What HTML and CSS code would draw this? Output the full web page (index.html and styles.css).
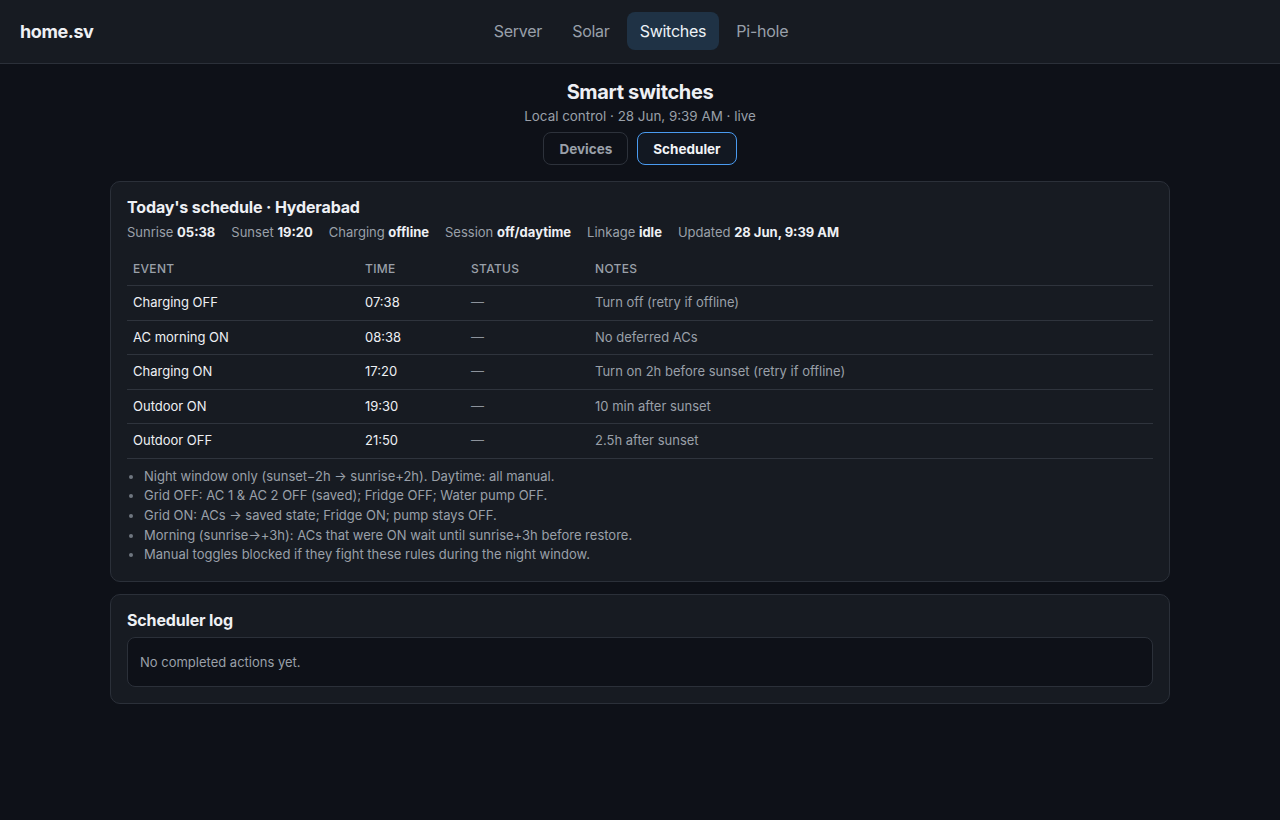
FILE: index.html
```html
<!DOCTYPE html>
<html lang="en">
<head>
<meta charset="utf-8">
<title>home.sv · Switches</title>
<link rel="stylesheet" href="styles.css">
</head>
<body>
<header class="topbar">
  <div class="logo">home.sv</div>
  <nav class="nav">
    <a class="nav-link">Server</a>
    <a class="nav-link">Solar</a>
    <a class="nav-link active">Switches</a>
    <a class="nav-link">Pi-hole</a>
  </nav>
</header>
<main class="main">
  <h1 class="page-title">Smart switches</h1>
  <div class="page-sub">Local control · 28 Jun, 9:39 AM · live</div>
  <div class="tabs">
    <button class="tab">Devices</button>
    <button class="tab active">Scheduler</button>
  </div>

  <section class="card">
    <h2 class="card-title">Today's schedule · Hyderabad</h2>
    <div class="meta">
      <span>Sunrise <b>05:38</b></span>
      <span>Sunset <b>19:20</b></span>
      <span>Charging <b>offline</b></span>
      <span>Session <b>off/daytime</b></span>
      <span>Linkage <b>idle</b></span>
      <span>Updated <b>28 Jun, 9:39 AM</b></span>
    </div>
    <table class="sched">
      <thead>
        <tr>
          <th class="c-event">Event</th>
          <th class="c-time">Time</th>
          <th class="c-status">Status</th>
          <th>Notes</th>
        </tr>
      </thead>
      <tbody>
        <tr><td>Charging OFF</td><td>07:38</td><td class="dash">—</td><td class="note">Turn off (retry if offline)</td></tr>
        <tr><td>AC morning ON</td><td>08:38</td><td class="dash">—</td><td class="note">No deferred ACs</td></tr>
        <tr><td>Charging ON</td><td>17:20</td><td class="dash">—</td><td class="note">Turn on 2h before sunset (retry if offline)</td></tr>
        <tr><td>Outdoor ON</td><td>19:30</td><td class="dash">—</td><td class="note">10 min after sunset</td></tr>
        <tr><td>Outdoor OFF</td><td>21:50</td><td class="dash">—</td><td class="note">2.5h after sunset</td></tr>
      </tbody>
    </table>
    <ul class="rules">
      <li>Night window only (sunset−2h → sunrise+2h). Daytime: all manual.</li>
      <li>Grid OFF: AC 1 &amp; AC 2 OFF (saved); Fridge OFF; Water pump OFF.</li>
      <li>Grid ON: ACs → saved state; Fridge ON; pump stays OFF.</li>
      <li>Morning (sunrise→+3h): ACs that were ON wait until sunrise+3h before restore.</li>
      <li>Manual toggles blocked if they fight these rules during the night window.</li>
    </ul>
  </section>

  <section class="card">
    <h2 class="card-title">Scheduler log</h2>
    <div class="log-box">No completed actions yet.</div>
  </section>
</main>
</body>
</html>
```

FILE: styles.css
```css
* { box-sizing: border-box; }
html, body { margin: 0; padding: 0; }
body {
  background: #0e1118;
  color: #e6e9ee;
  font-family: Inter, "Noto Sans", "Liberation Sans", sans-serif;
  min-height: 820px;
}
.topbar {
  height: 64px;
  background: #171b22;
  border-bottom: 1px solid #2b3039;
  display: flex;
  align-items: center;
  position: relative;
  padding: 0 20px;
}
.logo {
  font-size: 18px;
  font-weight: 700;
  color: #eef0f4;
  letter-spacing: -0.4px;
}
.nav {
  position: absolute;
  left: 0;
  right: 0;
  top: 12px;
  display: flex;
  justify-content: center;
  gap: 4px;
  padding-left: 2px;
}
.nav-link {
  font-size: 16px;
  line-height: 20px;
  letter-spacing: -0.25px;
  padding: 9px 13px;
  border-radius: 8px;
  color: #99a0aa;
  cursor: pointer;
}
.nav-link.active {
  background: #1f3245;
  color: #eef2f7;
}
.main {
  width: 1060px;
  margin: 16px auto 0;
  display: flex;
  flex-direction: column;
  align-items: stretch;
}
.page-title {
  margin: 0;
  text-align: center;
  font-size: 20px;
  line-height: 24px;
  font-weight: 700;
  letter-spacing: -0.35px;
  color: #eef0f4;
}
.page-sub {
  margin-top: 3px;
  text-align: center;
  font-size: 13.4px;
  line-height: 18px;
  color: #9aa0a9;
}
.tabs {
  margin-top: 7px;
  display: flex;
  justify-content: center;
  gap: 9px;
}
.tab {
  font-family: inherit;
  font-size: 13.5px;
  font-weight: 700;
  height: 33px;
  padding: 0 15px;
  border-radius: 8px;
  border: 1px solid #2d323b;
  background: #0e1118;
  color: #9aa0a9;
  cursor: pointer;
}
.tab.active {
  border-color: #4a9bf0;
  background: #121822;
  color: #f2f4f7;
}
.card {
  background: #171b22;
  border: 1px solid #2b3039;
  border-radius: 10px;
  padding: 15px 16px 16px;
  margin-top: 16px;
}
.card + .card { margin-top: 12px; }
.card-title {
  margin: 0;
  font-size: 16px;
  line-height: 20px;
  font-weight: 700;
  letter-spacing: -0.15px;
  color: #eef0f4;
}
.meta {
  margin-top: 6px;
  display: flex;
  gap: 16px;
  font-size: 13px;
  line-height: 18px;
  color: #9aa0a9;
}
.meta b { color: #eef0f4; font-weight: 700; }
.sched {
  margin-top: 11px;
  width: 100%;
  border-collapse: collapse;
  font-size: 13px;
}
.sched th {
  text-align: left;
  font-size: 12px;
  font-weight: 500;
  text-transform: uppercase;
  letter-spacing: 0.3px;
  color: #9aa0a9;
  padding: 8px 6px 8px;
  line-height: 17px;
  border-bottom: 1px solid #2f343d;
}
.c-event { width: 232px; }
.c-time { width: 106px; }
.c-status { width: 124px; }
.sched td {
  padding: 8px 6px;
  line-height: 17.5px;
  border-bottom: 1px solid #2f343d;
  color: #eef0f4;
}
.sched td.dash { color: #8d939c; }
.sched td.note { color: #9aa0a9; }
.rules {
  margin: 8px 0 0;
  padding-left: 17px;
  font-size: 13px;
  line-height: 19.7px;
  color: #9aa0a9;
}
.rules li::marker { color: #6f7680; font-size: 12px; }
.log-box {
  margin-top: 7px;
  background: #0e1118;
  border: 1px solid #2b3039;
  border-radius: 8px;
  padding: 15px 12px 15px;
  font-size: 13px;
  line-height: 18px;
  color: #9aa0a9;
}
```
